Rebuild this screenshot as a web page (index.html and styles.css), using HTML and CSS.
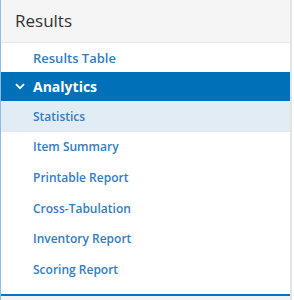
FILE: index.html
```html
<!DOCTYPE html>
<html>
<head>
<meta charset="utf-8">
<link rel="stylesheet" href="styles.css">
</head>
<body>
<div class="panel">
  <div class="head">Results</div>
  <nav class="menu">
    <a class="item top">Results Table</a>
    <a class="item group"><svg class="chev" width="10" height="7" viewBox="0 0 10 7"><path d="M1 1.2 L5 5.2 L9 1.2" fill="none" stroke="#fff" stroke-width="1.8"/></svg>Analytics</a>
    <a class="item sub active">Statistics</a>
    <a class="item sub">Item Summary</a>
    <a class="item sub">Printable Report</a>
    <a class="item sub">Cross-Tabulation</a>
    <a class="item sub">Inventory Report</a>
    <a class="item sub">Scoring Report</a>
  </nav>
  <div class="foot"></div>
</div>
</body>
</html>
```
FILE: styles.css
```css
html, body { margin: 0; padding: 0; background: #fff; }
body { font-family: "Open Sans", "Noto Sans", sans-serif; width: 294px; height: 300px; overflow: hidden; }
.panel {
  width: 289px;
  height: 300px;
  border-left: 1px solid #8bbbe9;
  border-right: 2px solid #e3e3e3;
  display: flex;
  flex-direction: column;
}
.head {
  background: #f5f5f5;
  height: 42px;
  border-bottom: 1px solid #e6e6e6;
  font-size: 17px;
  color: #333;
  padding-left: 14px;
  line-height: 42px;
}
.menu { display: flex; flex-direction: column; padding-bottom: 9px; }
.item {
  display: flex;
  align-items: center;
  padding-left: 32px;
  color: #337cc2;
  font-weight: 600;
  text-decoration: none;
}
.top { height: 29px; font-size: 13px; }
.group {
  height: 29px;
  background: #0071b9;
  color: #fff;
  font-weight: 700;
  font-size: 14px;
  padding-left: 14px;
}
.chev { margin-right: 8px; }
.sub { height: 30.6px; font-size: 12px; }
.active { background: #e2ecf5; }
.foot { border-top: 2px solid #0a72ba; background: #f3f3f3; flex: 1; }
```
